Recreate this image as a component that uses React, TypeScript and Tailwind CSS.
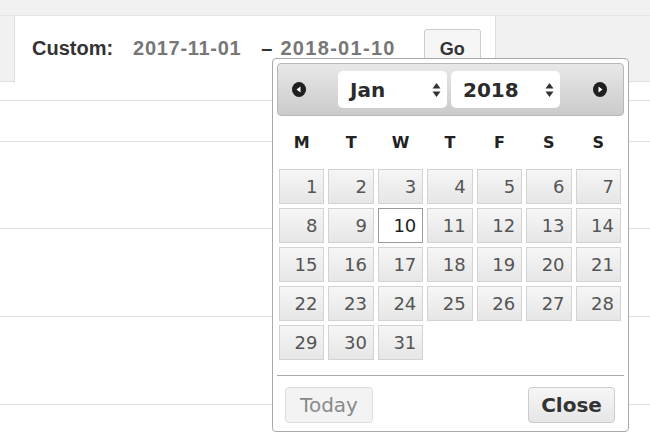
import React from "react";

const DAY_NAMES = ["M", "T", "W", "T", "F", "S", "S"];
const DAYS = Array.from({ length: 31 }, (_, i) => i + 1);
const SELECTED_DAY = 10;

function CircleArrow({ dir }: { dir: "left" | "right" }) {
  return (
    <svg width="16" height="17" viewBox="0 0 16 17" className="block">
      <ellipse cx="8" cy="8.5" rx="7" ry="7.5" fill="#1f1f1f" />
      {dir === "left" ? (
        <path d="M9.5 5.5 L5.5 8.5 L9.5 11.5 Z" fill="#fff" />
      ) : (
        <path d="M6.5 5.5 L10.5 8.5 L6.5 11.5 Z" fill="#fff" />
      )}
    </svg>
  );
}

function UpDown() {
  return (
    <svg width="9" height="16" viewBox="0 0 9 16" className="block">
      <path d="M4.5 1 L8.5 6.5 L0.5 6.5 Z" fill="#333" />
      <path d="M4.5 15 L8.5 9.5 L0.5 9.5 Z" fill="#333" />
    </svg>
  );
}

function FakeSelect({ value }: { value: string }) {
  return (
    <div className="flex h-[37px] w-[109px] items-center justify-between rounded-[5px] bg-white pl-[12px] pr-[6px] text-[20px] font-bold text-[#2b2b2b]">
      <span>{value}</span>
      <UpDown />
    </div>
  );
}

function DayCell({ day }: { day: number }) {
  const selected = day === SELECTED_DAY;
  return (
    <div
      className={
        selected
          ? "flex h-[35px] items-center justify-end border border-[#9a9a9a] bg-white pr-[6px] text-[18px] text-[#1e1e1e]"
          : "flex h-[35px] items-center justify-end border border-[#d3d3d3] bg-gradient-to-b from-[#f6f6f6] to-[#e6e6e6] pr-[6px] text-[18px] text-[#555]"
      }
    >
      {day}
    </div>
  );
}

function DatePicker() {
  return (
    <div className="absolute left-[272px] top-[58px] z-10 h-[374px] w-[357px] rounded-[4px] border border-[#aaaaaa] bg-white p-[4px] font-['DejaVu_Sans',Verdana,sans-serif]">
      <div className="flex h-[53px] items-center rounded-[4px] border border-[#b8b8b8] bg-gradient-to-b from-[#e8e8e8] to-[#cbcbcb]">
        <div className="ml-[13px] mr-[31px]">
          <CircleArrow dir="left" />
        </div>
        <FakeSelect value="Jan" />
        <div className="w-[4px]" />
        <FakeSelect value="2018" />
        <div className="ml-[32px]">
          <CircleArrow dir="right" />
        </div>
      </div>

      <div className="ml-[2px] w-[342px]">
        <div className="grid h-[53px] grid-cols-7 items-center gap-x-[4px] text-center text-[16px] font-bold text-[#222]">
          {DAY_NAMES.map((d, i) => (
            <div key={i}>{d}</div>
          ))}
        </div>
        <div className="grid grid-cols-7 gap-x-[4px] gap-y-[4px]">
          {DAYS.map((d) => (
            <DayCell key={d} day={d} />
          ))}
        </div>
      </div>

      <div className="mt-[15px] border-t border-[#aaaaaa] pt-[11px]">
        <div className="flex items-center justify-between pl-[8px] pr-[9px]">
          <div className="flex h-[36px] w-[88px] items-center justify-center rounded-[4px] border border-[#dddddd] bg-[#f3f3f3] text-[20px] text-[#8a8a8a]">
            Today
          </div>
          <div className="flex h-[36px] w-[87px] items-center justify-center rounded-[4px] border border-[#cccccc] bg-gradient-to-b from-[#f6f6f6] to-[#e6e6e6] text-[20px] font-bold text-[#333]">
            Close
          </div>
        </div>
      </div>
    </div>
  );
}

export default function App() {
  return (
    <div className="relative h-[448px] w-[650px] overflow-hidden bg-white font-['Liberation_Sans',Arial,sans-serif]">
      <div className="h-[82px] border-b border-[#e0e0e0] bg-[#f1f1f1] pt-[15px]">
        <div className="flex h-[67px] border-t border-[#e6e6e6]">
          <div className="ml-[14px] flex h-[67px] w-[482px] items-start border-l border-r border-[#dddddd] bg-white pt-[13px]">
            <div className="flex h-[38px] items-center pl-[17px] text-[20px] font-bold">
              <span className="text-[#333]">Custom:</span>
              <span className="ml-[20px] tracking-[0.7px] text-[#777]">2017-11-01</span>
              <span className="ml-[20px] text-[#333]">–</span>
              <span className="ml-[8px] tracking-[1.3px] text-[#777]">2018-01-10</span>
            </div>
            <div className="ml-[28px] flex h-[40px] w-[57px] items-center justify-center rounded-[3px] border border-[#cccccc] bg-[#f6f6f6] text-[18px] font-bold text-[#333]">
              Go
            </div>
          </div>
        </div>
      </div>

      <div>
        <div className="h-[18px]" />
        <div className="h-[41px] border-t border-[#dde1e5]" />
        <div className="h-[87px] border-t border-[#dde1e5]" />
        <div className="h-[88px] border-t border-[#dde1e5]" />
        <div className="h-[88px] border-t border-[#dde1e5]" />
        <div className="h-[44px] border-t border-[#dde1e5]" />
      </div>

      <DatePicker />
    </div>
  );
}
